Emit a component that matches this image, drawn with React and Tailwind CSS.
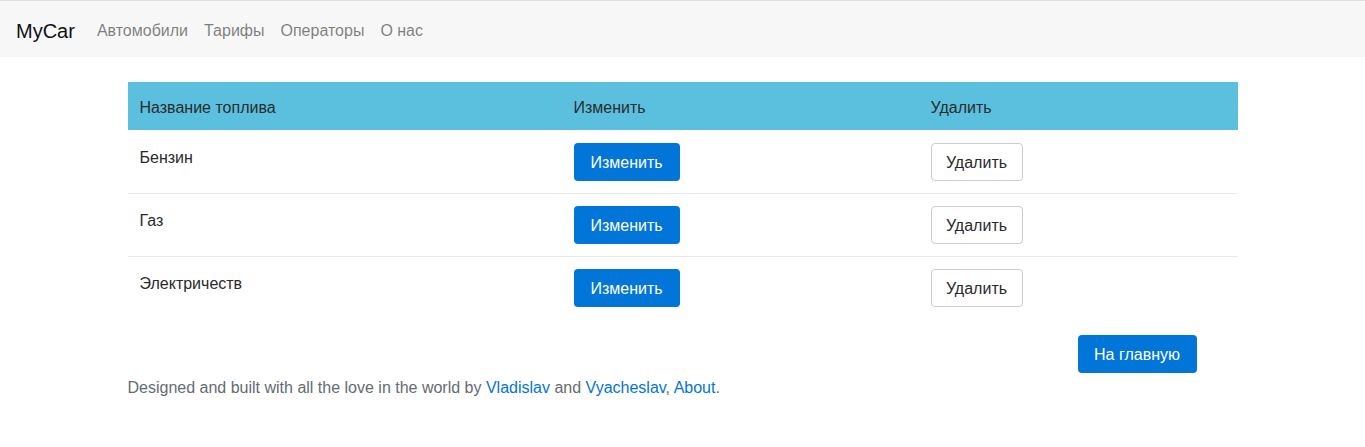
import React from "react";

const fuels = ["Бензин", "Газ", "Электричеств"];

export default function App() {
    return (
        <div className="min-h-screen bg-white font-['Liberation_Sans',sans-serif] text-[16px] leading-6 text-[#292b2c]">
            {/* NAVBAR */}
            <nav className="flex h-[57px] items-center border-t border-[#e0e0e0] bg-[#f7f7f7] px-4 pt-[3px]">
                <a className="mr-[14px] text-[20px] leading-[30px] text-[#111]">MyCar</a>
                <div className="flex">
                    {["Автомобили", "Тарифы", "Операторы", "О нас"].map((item) => (
                        <a key={item} className="px-2 text-[rgba(0,0,0,0.5)]">
                            {item}
                        </a>
                    ))}
                </div>
            </nav>

            {/* CONTENT */}
            <div className="mx-auto w-[1140px] px-[15px] pt-[25px]">
                <table className="w-full border-collapse text-left">
                    <thead>
                        <tr className="h-12 bg-[#5bc0de]">
                            <th className="w-[434px] px-3 pt-1 font-normal">Название топлива</th>
                            <th className="w-[357px] px-3 pt-1 font-normal">Изменить</th>
                            <th className="px-3 pt-1 font-normal">Удалить</th>
                        </tr>
                    </thead>
                    <tbody>
                        {fuels.map((fuel, i) => (
                            <tr
                                key={fuel}
                                className={`border-t ${i > 0 ? "border-[#e9e9e9]" : "border-white"}`}
                            >
                                <td className="px-3 pt-[15px] pb-3 align-top">{fuel}</td>
                                <td className="p-3 align-top">
                                    <button className="h-[38px] w-[106px] rounded bg-[#0275d8] pt-[2px] text-white">
                                        Изменить
                                    </button>
                                </td>
                                <td className="p-3 align-top">
                                    <button className="h-[38px] w-[92px] rounded border border-[#ccc] bg-white pt-[2px] text-[#292b2c]">
                                        Удалить
                                    </button>
                                </td>
                            </tr>
                        ))}
                    </tbody>
                </table>

                <div className="mt-4 flex justify-end pr-[41px]">
                    <button className="h-[38px] w-[119px] rounded bg-[#0275d8] pt-[2px] text-white">
                        На главную
                    </button>
                </div>

                <p className="mt-[3px] text-[#636c72]">
                    Designed and built with all the love in the world by{" "}
                    <a className="text-[#0275d8]">Vladislav</a> and{" "}
                    <a className="text-[#0275d8]">Vyacheslav</a>,{" "}
                    <a className="text-[#0275d8]">About</a>.
                </p>
            </div>
        </div>
    );
}
